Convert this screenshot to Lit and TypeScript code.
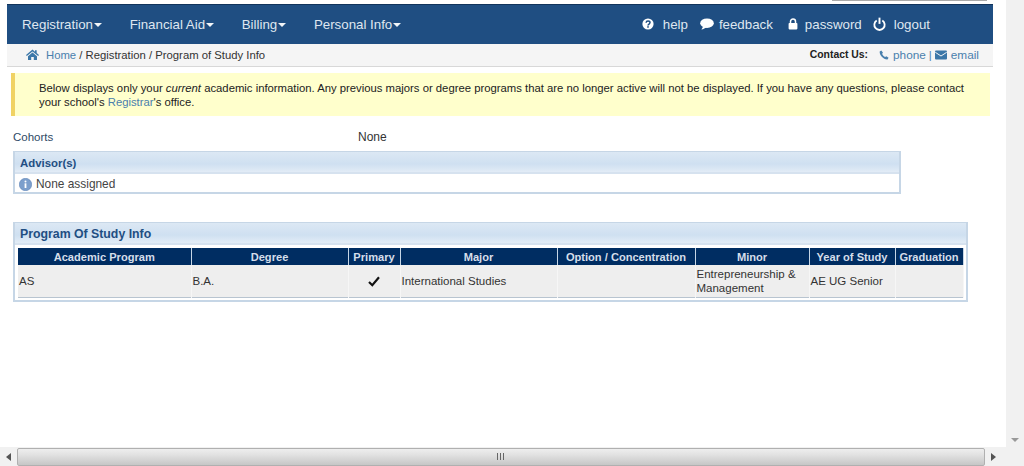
import { LitElement, html, css } from "lit";
import { customElement } from "lit/decorators.js";

const caret = html`<span class="caret"></span>`;
const icons = {
  help: html`<svg width="12" height="12" viewBox="0 0 12 12"><circle cx="6" cy="6" r="5.6" fill="#fff"/><path d="M4.1 4.7C4.2 3.5 5 3 6 3c1.2 0 2 .7 2 1.6 0 1.500-2 1.400-2 2.900" fill="none" stroke="#1f4e82" stroke-width="1.5"/><rect x="5.2" y="8.2" width="1.6" height="1.5" fill="#1f4e82"/></svg>`,
  chat: html`<svg width="14" height="12" viewBox="0 0 14 12"><ellipse cx="7" cy="5.2" rx="6.8" ry="4.8" fill="#fff"/><path d="M3.5 8 L1.4 11.6 C3.5 11.2 5.5 10.2 6.8 9Z" fill="#fff"/></svg>`,
  lock: html`<svg width="10" height="12" viewBox="0 0 10 12"><rect x="0.6" y="5" width="8.8" height="6.4" rx="0.8" fill="#fff"/><path d="M2.5 5.5V3.6a2.5 2.5 0 0 1 5 0v1.9" fill="none" stroke="#fff" stroke-width="1.5"/></svg>`,
  power: html`<svg width="13" height="14" viewBox="0 0 12 13"><path d="M3.4 3.2a4.8 4.8 0 1 0 5.2 0" fill="none" stroke="#fff" stroke-width="1.7"/><path d="M6 .6V6.4" stroke="#fff" stroke-width="1.8"/></svg>`,
  home: html`<svg width="13" height="11" viewBox="0 0 13 11"><path d="M6.5.6 0 6l.8 1L6.5 2.400 12.200 7l.8-1-2.300-1.900V1.200H9v1.500Z" fill="#3b77a8"/><path d="M2 7.200 6.500 3.500 11 7.200V11H7.800V8H5.200v3H2Z" fill="#3b77a8"/></svg>`,
  phone: html`<svg width="10" height="10" viewBox="0 0 10 10"><path d="M2.300.4.700 1.400C.2 4.900 4.600 9.700 8.500 9.400L9.600 7.700 7.300 6.200 6.200 7.100C4.900 6.500 3.600 5.100 3.100 3.800L4 2.800Z" fill="#4a80ad"/></svg>`,
  mail: html`<svg width="12" height="10" viewBox="0 0 12 10"><rect y="0.500" width="12" height="9" rx="1" fill="#3b77a8"/><path d="M.3 2.300 6 6l5.700-3.700" fill="none" stroke="#f5f5f5" stroke-width="1"/></svg>`,
  info: html`<svg width="13" height="13" viewBox="0 0 13 13"><circle cx="6.500" cy="6.500" r="6.200" fill="#7c9fcc" stroke="#6286b8" stroke-width="0.600"/><circle cx="6.500" cy="3.600" r="1" fill="#fff"/><rect x="5.600" y="5.300" width="1.800" height="4.700" fill="#fff"/></svg>`,
  check: html`<svg width="12" height="11" viewBox="0 0 12 11"><path d="M1 6 4.300 9.200 11 1.200" fill="none" stroke="#111" stroke-width="2.200"/></svg>`,
};

const columns = [
  ["Academic Program", 173], ["Degree", 157], ["Primary", 52], ["Major", 157],
  ["Option / Concentration", 138], ["Minor", 114], ["Year of Study", 86], ["Graduation", 68],
] as const;

@customElement("app-root")
export class AppRoot extends LitElement {
  static styles = css`
    :host { display: grid; grid-template-columns: 1fr 18px; grid-template-rows: 447px 19px; width: 1024px; height: 466px; overflow: hidden; background: #fff; font: 11.3px "Liberation Sans", Arial, sans-serif; color: #333; }
    * { box-sizing: border-box; }
    a { color: #4a80ad; text-decoration: none; }
    .page { overflow: hidden; display: flex; flex-direction: column; }
    .topline { height: 4px; padding-left: 832px; flex: none; }
    .topline div { width: 155px; height: 1px; background: #aaa; }
    .head { margin-left: 7px; width: 986px; flex: none; }
    nav { height: 40px; background: #1f4e82; border-top: 1px solid #12345c; color: #dfe7f0; display: flex; align-items: center; justify-content: space-between; padding: 0 63px 0 15px; font-size: 13.3px; }
    .menu, .tools { display: flex; align-items: center; }
    .menu { gap: 27.7px; }
    .menu span.item { display: flex; align-items: center; gap: 1px; }
    .caret { width: 0; height: 0; border-left: 4px solid transparent; border-right: 4px solid transparent; border-top: 4px solid #f2f5f8; margin-top: 1px; }
    .tools { gap: 12px; margin-top: -1px; }
    .tools span { display: flex; align-items: center; gap: 8px; }
    .tools span.hp { gap: 9px; }
    .tools span.fb { gap: 5px; }
    .tools span.pw { gap: 7px; margin-left: 3px; }
    .tools span.lo { margin-left: -1px; }
    .crumb { height: 23px; background: #f5f5f5; border-bottom: 1px solid #d8d8d8; display: flex; align-items: center; justify-content: space-between; padding: 0 14px 1px 19px; }
    .crumb > div { display: flex; align-items: center; }
    .homeicon { margin-right: 7px; display: flex; }
    .contact b { margin-right: 11px; color: #222; font-size: 10.4px; }
    .contact svg { margin-right: 4px; }
    .contact a { font-size: 11.8px; }
    .sep { margin: 0 3px; color: #4a80ad; }
    .alert { margin: 6px 0 0 11px; width: 979px; height: 43px; flex: none; background: #ffffcc; border-left: 4px solid #f0d264; padding: 8px 12px 0 24px; line-height: 14px; color: #222; }
    .row { margin: 14px 0 0 13px; display: flex; line-height: 14px; flex: none; font-size: 11.5px; }
    .row .label { width: 345px; color: #2e4a66; }
    .row .val { font-size: 12px; }
    .panel { margin-left: 13px; border: 2px solid #c6d6e6; border-top-width: 1px; flex: none; }
    .panel h2 { margin: 0; height: 22px; padding: 1px 0 0 5px; line-height: 21px; color: #1f4e82; background: linear-gradient(#dce8f4, #cfe0f1 60%, #e2ecf6); border-bottom: 2px solid #d6e2ef; }
    .adv { margin-top: 7px; width: 888px; height: 43px; }
    .adv h2 { font-size: 11.4px; }
    .adv .body { display: flex; align-items: center; gap: 4px; padding: 1px 0 0 4px; height: 19px; color: #444; font-size: 11.9px; }
    .prog { margin-top: 28px; width: 955px; height: 80px; padding: 0; }
    .prog h2 { font-size: 12.3px; }
    .tablewrap { padding: 3px 2px 0 3px; }
    table { border-collapse: collapse; table-layout: fixed; width: 945px; border-right: 1px solid #b8c4d0; border-bottom: 1px solid #b8c4d0; }
    th { height: 17px; padding: 1px 0 0; background: #002d62; color: #d5deea; font-size: 11.1px; font-weight: bold; border-right: 1px solid #c6d6e6; line-height: 15px; }
    td { height: 32px; padding: 1px 1px 0; background: #eeeeee; color: #333; line-height: 14px; border-right: 1px solid #f6f6f6; font-size: 11.5px; }
    td.c { text-align: center; padding-top: 4px; }
    .vbar { background: #f1f1f1; display: flex; align-items: flex-end; justify-content: center; padding-bottom: 5px; }
    .hbar { grid-column: 1 / 3; background: #f1f1f1; display: flex; align-items: center; }
    .arrow { width: 17px; display: flex; justify-content: center; flex: none; }
    .thumb { width: 968px; height: 18px; border: 1px solid #b0b0b0; border-radius: 2px; background: linear-gradient(#eeeeee, #e2e2e2 35%, #c6c6c6); display: flex; align-items: center; justify-content: center; gap: 1px; }
    .thumb i { width: 1px; height: 7px; background: #666; margin-right: 1px; }
    .tri-l { border-top: 4px solid transparent; border-bottom: 4px solid transparent; border-right: 5px solid #555; }
    .tri-r { border-top: 4px solid transparent; border-bottom: 4px solid transparent; border-left: 5px solid #555; }
    .tri-d { border-left: 4px solid transparent; border-right: 4px solid transparent; border-top: 4px solid #999; }
  `;

  render() {
    return html`
      <div class="page">
        <div class="topline"><div></div></div>
        <div class="head">
          <nav>
            <div class="menu">
              <span class="item">Registration${caret}</span>
              <span class="item">Financial Aid${caret}</span>
              <span class="item">Billing${caret}</span>
              <span class="item">Personal Info${caret}</span>
            </div>
            <div class="tools">
              <span class="hp">${icons.help}help</span>
              <span class="fb">${icons.chat}feedback</span>
              <span class="pw">${icons.lock}password</span>
              <span class="lo">${icons.power}logout</span>
            </div>
          </nav>
          <div class="crumb">
            <div><span class="homeicon">${icons.home}</span><a href="#">Home</a>&nbsp;/ Registration / Program of Study Info</div>
            <div class="contact"><b>Contact Us:</b>${icons.phone}<a href="#">phone</a><span class="sep">|</span>${icons.mail}<a href="#">email</a></div>
          </div>
        </div>
        <div class="alert">Below displays only your <em>current</em> academic information. Any previous majors or degree programs that are no longer active will not be displayed. If you have any questions, please contact your school's <a href="#">Registrar</a>'s office.</div>
        <div class="row"><span class="label">Cohorts</span><span class="val">None</span></div>
        <section class="panel adv">
          <h2>Advisor(s)</h2>
          <div class="body">${icons.info}None assigned</div>
        </section>
        <section class="panel prog">
          <h2>Program Of Study Info</h2>
          <div class="tablewrap">
            <table>
              <colgroup>${columns.map(([, w]) => html`<col style="width:${w}px" />`)}</colgroup>
              <thead><tr>${columns.map(([t]) => html`<th>${t}</th>`)}</tr></thead>
              <tbody>
                <tr>
                  <td>AS</td><td>B.A.</td><td class="c">${icons.check}</td><td>International Studies</td><td></td>
                  <td>Entrepreneurship &amp; Management</td><td>AE UG Senior</td><td></td>
                </tr>
              </tbody>
            </table>
          </div>
        </section>
      </div>
      <div class="vbar"><span class="tri-d"></span></div>
      <div class="hbar">
        <span class="arrow"><span class="tri-l"></span></span>
        <div class="thumb"><i></i><i></i><i></i></div>
        <span class="arrow"><span class="tri-r"></span></span>
      </div>
    `;
  }
}
